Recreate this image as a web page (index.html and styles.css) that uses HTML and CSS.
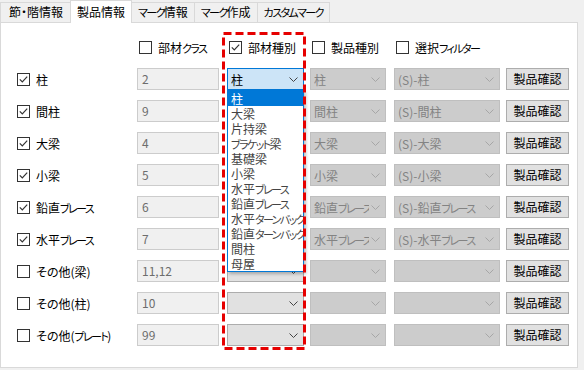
FILE: index.html
```html
<!DOCTYPE html>
<html lang="ja">
<head>
  <meta charset="utf-8">
  <title>製品情報</title>
  <link rel="stylesheet" href="styles.css">
</head>
<body>
  <svg class="defs" aria-hidden="true">
    <symbol id="box" viewBox="0 0 13 13">
      <rect x="0.5" y="0.5" width="12" height="12" fill="#fff" stroke="#333"/>
    </symbol>
    <symbol id="tick" viewBox="0 0 13 13">
      <rect x="0.5" y="0.5" width="12" height="12" fill="#fff" stroke="#333"/>
      <path d="M2.8 6.4 L5.3 8.9 L10.2 3.6" fill="none" stroke="#333" stroke-width="1.2"/>
    </symbol>
    <symbol id="chev" viewBox="0 0 9 5">
      <path d="M0.5 0.5 L4.5 4.5 L8.5 0.5" fill="none" stroke="currentColor"/>
    </symbol>
  </svg>

  <div class="tabs">
    <div class="tab tab-first">節・階情報</div>
    <div class="tab tab-active">製品情報</div>
    <div class="tab"><span class="k">マーク</span>情報</div>
    <div class="tab"><span class="k">マーク</span>作成</div>
    <div class="tab"><span class="k">カスタムマーク</span></div>
  </div>

  <div class="panel">
    <div class="grid">
      <!-- header -->
      <div></div>
      <div class="check head"><svg class="box"><use href="#box"/></svg><span>部材<span class="k">クラス</span></span></div>
      <div class="check head"><svg class="box"><use href="#tick"/></svg><span>部材種別</span></div>
      <div class="check head"><svg class="box"><use href="#box"/></svg><span>製品種別</span></div>
      <div class="check head"><svg class="box"><use href="#box"/></svg><span>選択<span class="k">フィルター</span></span></div>
      <div></div>

      <!-- 柱 -->
      <div class="check"><svg class="box"><use href="#tick"/></svg><span>柱</span></div>
      <div class="field">2</div>
      <div class="combo combo-open">
        <span class="combo-text">柱</span><svg class="chev"><use href="#chev"/></svg>
        <ul class="list">
          <li class="list-item selected">柱</li>
          <li class="list-item">大梁</li>
          <li class="list-item">片持梁</li>
          <li class="list-item"><span class="k">ブラケット</span>梁</li>
          <li class="list-item">基礎梁</li>
          <li class="list-item">小梁</li>
          <li class="list-item">水平<span class="k">ブレース</span></li>
          <li class="list-item">鉛直<span class="k">ブレース</span></li>
          <li class="list-item">水平<span class="k">ターンバックル</span></li>
          <li class="list-item">鉛直<span class="k">ターンバックル</span></li>
          <li class="list-item">間柱</li>
          <li class="list-item">母屋</li>
        </ul>
      </div>
      <div class="combo combo-off c-mid"><span class="combo-text">柱</span><svg class="chev"><use href="#chev"/></svg></div>
      <div class="combo combo-off c-wide"><span class="combo-text">(S)-柱</span><svg class="chev"><use href="#chev"/></svg></div>
      <div class="button">製品確認</div>

      <!-- 間柱 -->
      <div class="check"><svg class="box"><use href="#tick"/></svg><span>間柱</span></div>
      <div class="field">9</div>
      <div class="combo"><span class="combo-text"></span><svg class="chev"><use href="#chev"/></svg></div>
      <div class="combo combo-off c-mid"><span class="combo-text">間柱</span><svg class="chev"><use href="#chev"/></svg></div>
      <div class="combo combo-off c-wide"><span class="combo-text">(S)-間柱</span><svg class="chev"><use href="#chev"/></svg></div>
      <div class="button">製品確認</div>

      <!-- 大梁 -->
      <div class="check"><svg class="box"><use href="#tick"/></svg><span>大梁</span></div>
      <div class="field">4</div>
      <div class="combo"><span class="combo-text"></span><svg class="chev"><use href="#chev"/></svg></div>
      <div class="combo combo-off c-mid"><span class="combo-text">大梁</span><svg class="chev"><use href="#chev"/></svg></div>
      <div class="combo combo-off c-wide"><span class="combo-text">(S)-大梁</span><svg class="chev"><use href="#chev"/></svg></div>
      <div class="button">製品確認</div>

      <!-- 小梁 -->
      <div class="check"><svg class="box"><use href="#tick"/></svg><span>小梁</span></div>
      <div class="field">5</div>
      <div class="combo"><span class="combo-text"></span><svg class="chev"><use href="#chev"/></svg></div>
      <div class="combo combo-off c-mid"><span class="combo-text">小梁</span><svg class="chev"><use href="#chev"/></svg></div>
      <div class="combo combo-off c-wide"><span class="combo-text">(S)-小梁</span><svg class="chev"><use href="#chev"/></svg></div>
      <div class="button">製品確認</div>

      <!-- 鉛直ブレース -->
      <div class="check"><svg class="box"><use href="#tick"/></svg><span>鉛直<span class="k">ブレース</span></span></div>
      <div class="field">6</div>
      <div class="combo"><span class="combo-text"></span><svg class="chev"><use href="#chev"/></svg></div>
      <div class="combo combo-off c-mid"><span class="combo-text">鉛直<span class="k">ブレース</span></span><svg class="chev"><use href="#chev"/></svg></div>
      <div class="combo combo-off c-wide"><span class="combo-text">(S)-鉛直<span class="k">ブレース</span></span><svg class="chev"><use href="#chev"/></svg></div>
      <div class="button">製品確認</div>

      <!-- 水平ブレース -->
      <div class="check"><svg class="box"><use href="#tick"/></svg><span>水平<span class="k">ブレース</span></span></div>
      <div class="field">7</div>
      <div class="combo"><span class="combo-text"></span><svg class="chev"><use href="#chev"/></svg></div>
      <div class="combo combo-off c-mid"><span class="combo-text">水平<span class="k">ブレース</span></span><svg class="chev"><use href="#chev"/></svg></div>
      <div class="combo combo-off c-wide"><span class="combo-text">(S)-水平<span class="k">ブレース</span></span><svg class="chev"><use href="#chev"/></svg></div>
      <div class="button">製品確認</div>

      <!-- その他(梁) -->
      <div class="check"><svg class="box"><use href="#box"/></svg><span>その他(梁)</span></div>
      <div class="field">11,12</div>
      <div class="combo"><span class="combo-text"></span><svg class="chev"><use href="#chev"/></svg></div>
      <div class="combo combo-off c-mid"><span class="combo-text"></span><svg class="chev"><use href="#chev"/></svg></div>
      <div class="combo combo-off c-wide"><span class="combo-text"></span><svg class="chev"><use href="#chev"/></svg></div>
      <div class="button">製品確認</div>

      <!-- その他(柱) -->
      <div class="check"><svg class="box"><use href="#box"/></svg><span>その他(柱)</span></div>
      <div class="field">10</div>
      <div class="combo"><span class="combo-text"></span><svg class="chev"><use href="#chev"/></svg></div>
      <div class="combo combo-off c-mid"><span class="combo-text"></span><svg class="chev"><use href="#chev"/></svg></div>
      <div class="combo combo-off c-wide"><span class="combo-text"></span><svg class="chev"><use href="#chev"/></svg></div>
      <div class="button">製品確認</div>

      <!-- その他(プレート) -->
      <div class="check"><svg class="box"><use href="#box"/></svg><span>その他(<span class="k">プレート</span>)</span></div>
      <div class="field">99</div>
      <div class="combo"><span class="combo-text"></span><svg class="chev"><use href="#chev"/></svg></div>
      <div class="combo combo-off c-mid"><span class="combo-text"></span><svg class="chev"><use href="#chev"/></svg></div>
      <div class="combo combo-off c-wide"><span class="combo-text"></span><svg class="chev"><use href="#chev"/></svg></div>
      <div class="button">製品確認</div>
    </div>

    <svg class="mark" width="84" height="318" aria-hidden="true">
      <rect x="1.5" y="1.5" width="81" height="315" fill="none" stroke="#E60000" stroke-width="3" stroke-dasharray="8 4"/>
    </svg>
  </div>
</body>
</html>
```

FILE: styles.css
```css
*, *::before, *::after {
  margin: 0;
  padding: 0;
  box-sizing: border-box;
}

body {
  width: 584px;
  height: 370px;
  overflow: hidden;
  background-color: #F0F0F0;
  color: #000000;
  font-family: "Noto Sans CJK JP", sans-serif;
  font-size: 12px;
  font-feature-settings: "palt";
}

/* katakana in the Windows UI font is narrower than in Noto */
.k {
  font-size: 11px;
  letter-spacing: -1.6px;
}

.defs {
  display: block;
  width: 0;
  height: 0;
}

.tabs {
  display: flex;
  align-items: flex-end;
  height: 22px;
}

.tab {
  height: 20px;
  margin-left: -1px;
  padding: 0 6px;
  border: 1px solid #D9D9D9;
  border-bottom: none;
  background-color: #F0F0F0;
  line-height: 18px;
  white-space: nowrap;
}

.tab-first {
  margin-left: 0;
  padding: 0 7px 0 8px;
}

.tab-active {
  position: relative;
  z-index: 1;
  height: 23px;
  margin-bottom: -1px;
  padding: 0 6px;
  background-color: #FFFFFF;
  line-height: 21px;
}

.panel {
  position: relative;
  width: 578px;
  height: 346px;
  padding: 8px 0 0 16px;
  border: 1px solid #D9D9D9;
  background-color: #FFFFFF;
}

.grid {
  display: grid;
  grid-template-columns: 120px 90px 83px 84px 112px 63px;
  grid-auto-rows: 32px;
  align-items: center;
}

.check {
  display: flex;
  align-items: center;
  gap: 6px;
  white-space: nowrap;
}

.check.head {
  margin-left: 2px;
}

.box {
  flex-shrink: 0;
  width: 13px;
  height: 13px;
}

.field {
  width: 82px;
  height: 22px;
  padding-left: 4px;
  border: 1px solid #CCCCCC;
  background-color: #F0F0F0;
  color: #6D6D6D;
  line-height: 20px;
}

.combo {
  display: flex;
  align-items: center;
  width: 77px;
  height: 22px;
  padding: 0 5px 0 3px;
  border: 1px solid #ADADAD;
  background-color: #E1E1E1;
  color: #444444;
}

.combo-text {
  flex: 1;
  min-width: 0;
  overflow: hidden;
  white-space: nowrap;
  color: #000000;
}

.chev {
  flex-shrink: 0;
  width: 9px;
  height: 5px;
  margin-left: 2px;
}

.combo-open {
  position: relative;
  border-color: #0078D7;
  background-color: #CCE4F7;
}

.combo-off {
  border-color: #BFBFBF;
  background-color: #CCCCCC;
  color: #A6A6A6;
}

.combo-off .combo-text {
  color: #838383;
}

.c-mid {
  width: 76px;
}

.c-wide {
  width: 106px;
}

.button {
  width: 63px;
  height: 22px;
  border: 1px solid #ADADAD;
  background-color: #E1E1E1;
  text-align: center;
  line-height: 20px;
}

.list {
  position: absolute;
  left: -1px;
  top: 21px;
  z-index: 2;
  width: 77px;
  border: 1px solid #0078D7;
  background-color: #FFFFFF;
  box-shadow: 2px 2px 3px rgba(0, 0, 0, 0.25);
  list-style: none;
}

.list-item {
  height: 15px;
  padding-left: 3px;
  overflow: hidden;
  white-space: nowrap;
  line-height: 15px;
}

.list-item.selected {
  background-color: #0078D7;
  color: #FFFFFF;
}

.mark {
  position: absolute;
  left: 221px;
  top: 9px;
  z-index: 3;
}
```
